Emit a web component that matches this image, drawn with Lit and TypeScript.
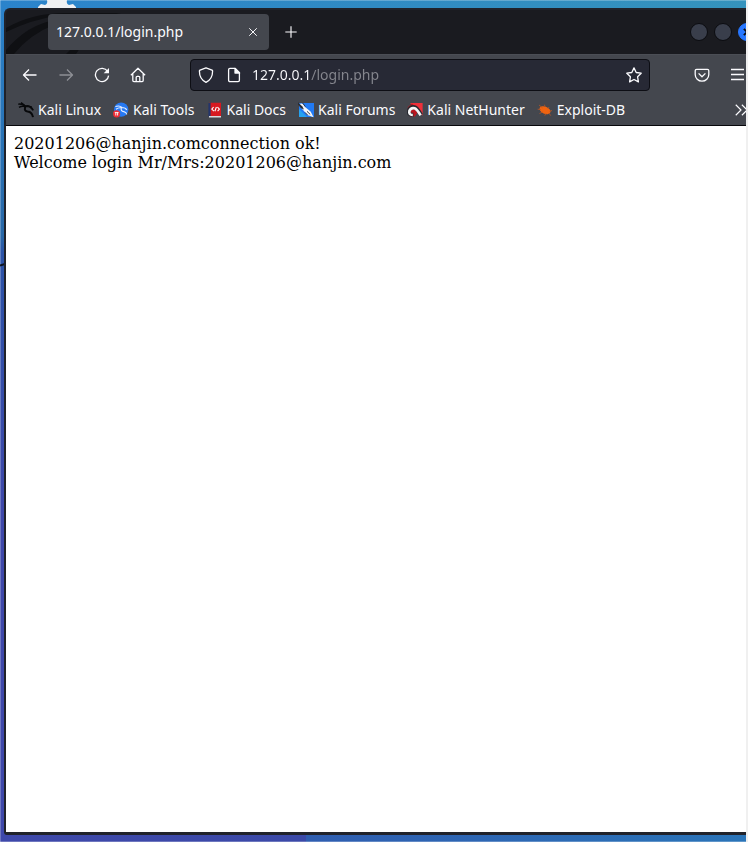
import { LitElement, html, css, svg } from "lit";
import { customElement } from "lit/decorators.js";

const icon = (size: number, body: unknown, cls = "") =>
  html`<svg class="icon ${cls}" width=${size} height=${size} viewBox="0 0 16 16" aria-hidden="true">${body}</svg>`;

const back = svg`<path d="M14.5 8H1.5M7 2.5L1.5 8L7 13.5"/>`;
const forward = svg`<path d="M1.5 8H14.5M9 2.5L14.5 8L9 13.5"/>`;
const reload = svg`<path d="M13.6 4.4A6.6 6.6 0 1 0 14.6 8.6"/><path d="M15 1V6.3H9.7Z" fill="currentColor" stroke="none"/>`;
const home = svg`<path d="M0.9 8.2L8 1.2L15.1 8.2M2.8 7V13.6Q2.8 14.7 3.9 14.7H12.1Q13.2 14.7 13.2 13.6V7M6.2 14.5V10.3Q6.2 9.3 7.2 9.3H8.8Q9.8 9.3 9.8 10.3V14.5"/>`;
const shield = svg`<path d="M8 0.8L14 3.1Q14.6 3.4 14.6 4C14.6 9.4 12.4 13.2 8 15.3C3.6 13.2 1.4 9.4 1.4 4Q1.4 3.4 2 3.1Z"/>`;
const doc = svg`<path d="M3.6 1.4H9.2L13.4 5.6V13.2Q13.4 14.6 12 14.6H4Q2.6 14.6 2.6 13.2V2.8Q2.6 1.4 4 1.4"/><path d="M9 1.4V6H13.6Z" fill="currentColor"/>`;
const star = svg`<path d="M8 0.9L10.2 5.5L15.2 6.2L11.6 9.8L12.4 14.9L8 12.5L3.6 14.9L4.4 9.8L0.8 6.2L5.8 5.5Z"/>`;
const pocket = svg`<path d="M2.6 2.4H13.4Q14.8 2.4 14.8 3.8V7.4A6.8 6.8 0 0 1 1.2 7.4V3.8Q1.2 2.4 2.6 2.4ZM4.6 6.4L8 9.7L11.4 6.4"/>`;
const menu = svg`<path d="M1 2.5H14M1 7.5H14M1 12.5H14"/>`;
const more = svg`<path d="M2 2L8 8L2 14M9 2L15 8L9 14"/>`;
const close = svg`<path d="M3 3L13 13M13 3L3 13"/>`;
const plus = svg`<path d="M8 1.5V14.5M1.5 8H14.5"/>`;

const bookmarks = [
  {
    label: "Kali Linux",
    art: svg`<g fill="none" stroke="#08090b"><path d="M0.3 2.2Q4 1.6 7.4 4.6M1 5.4Q4 3.6 7 4.6M3 0.6L6.5 3.4" stroke-width="1.5"/><path d="M5 3.2Q7.8 3.8 7 6Q6.2 9 9.6 9.4Q14.2 9.8 15 15.2" stroke-width="2"/><path d="M6.6 4.4Q12 2.6 15.2 8.4M9 4.2L13.8 5.2" stroke-width="1.8"/></g>`,
  },
  {
    label: "Kali Tools",
    art: svg`<circle cx="8.2" cy="7.6" r="7.2" fill="#2679f3"/><path d="M2.4 4.6Q6.5 3 9 5.5M3 7.2Q6 5 9 6M8.3 5.4Q7.4 9.2 10.8 9.6Q13.4 10.2 13.8 12.4M8.8 5.5Q12.6 5.5 13.8 8" fill="none" stroke="#e6efff" stroke-width="1.1"/><circle cx="3.6" cy="11.8" r="3.6" fill="#ed2d35"/><path d="M2.8 10.4V13.5M4.6 10.4V13.5M1.8 10.6H5.6" stroke="#fff" stroke-width="0.9"/>`,
  },
  {
    label: "Kali Docs",
    art: svg`<path d="M2 0.8H14V14.2H2Z" fill="#d71920"/><path d="M1.4 1.2L3.6 0.6V14.4H1.4Z" fill="#24356b"/><path d="M2 14H14V15.6H2Z" fill="#d9d9dc"/><path d="M6.6 5L4.8 7.2L7 9.2M10.4 5L12.4 7.2L10.6 9.2M9.4 5L7.9 9.3" fill="none" stroke="#fff" stroke-width="1.1"/>`,
  },
  {
    label: "Kali Forums",
    art: svg`<path d="M1 1H16V15H1Z" fill="#217af4"/><path d="M1 7L9 15H1Z" fill="#26a2ef"/><path d="M0.4 2L4.4 1.4L7 5L12.6 9.6L15.6 15.2L9.4 13L4.2 7Z" fill="#f4f5f7"/><path d="M0 0.2L4.4 4.6L6 7.6L3 6.2L0 2.6Z" fill="#292d36"/><path d="M9 9.3L12.2 12.4M4.4 0.8L7.4 4.6M7 10.4L9.6 13" fill="none" stroke="#292d36" stroke-width="0.9"/>`,
  },
  {
    label: "Kali NetHunter",
    art: svg`<path d="M3 1H15.6V13.6Z" fill="#ef303a"/><path d="M0.8 5L5 1.4L12 8L8 14.6H3Q0.4 11 0.8 5Z" fill="#b9161f"/><path d="M6.4 12.8Q1 13.2 1.8 8.8Q3 4.6 7.6 5.2Q10.2 5.8 14 13" fill="none" stroke="#272a31" stroke-width="4"/><path d="M5.8 13Q1.6 13 2.4 9Q3.6 5.4 7.6 6.2Q10 7 13.6 13.4" fill="none" stroke="#f5f5f6" stroke-width="2.7"/>`,
  },
  {
    label: "Exploit-DB",
    art: svg`<ellipse cx="8" cy="8.2" rx="5.8" ry="3.6" transform="rotate(24 8 8.2)" fill="#ef6310"/><path d="M2 3L5.4 5.7M7.4 2.7L8.2 5M0.6 7.2L4 7.7M2.5 11.5L5.5 10M7.8 13.7L9 11.3M13.8 13.7L11.8 11M12 5L11 7M15 8.5L12.6 9.4" stroke="#b85724" stroke-width="0.8"/>`,
  },
];

@customElement("app-root")
export class AppRoot extends LitElement {
  static styles = css`
    :host {
      display: block;
      box-sizing: border-box;
      position: relative;
      min-height: 100vh;
      padding: 8px 0 7px 4px;
      overflow: hidden;
      border-right: 2px solid #f0f0f0;
      font: 14px/20px "Noto Sans", sans-serif;
      color: #fbfbfe;
      background:
        linear-gradient(#ffffff40, #ffffff40) top / 100% 1px no-repeat,
        linear-gradient(#ffffff40, #ffffff40) bottom / 100% 1px no-repeat,
        linear-gradient(#ffffff40, #ffffff40) left / 1px 100% no-repeat,
        linear-gradient(90deg, #2b83cb, #3593bd) top / 100% 9px no-repeat,
        linear-gradient(90deg, #3e48aa, #3b49a8 41%, #2f5db0 41%, #2a74b8) bottom / 100% 9px no-repeat,
        linear-gradient(#2b83cb, #2868a8 28%, #2b53a8 30%, #3e48aa 60%);
    }
    * { box-sizing: border-box; }
    .gear { position: absolute; top: 0; left: 38px; }
    .branch { position: absolute; top: 262px; left: 0; }
    .window {
      position: relative;
      display: flex;
      flex-direction: column;
      min-height: calc(100vh - 15px);
      border: solid #20222a;
      border-width: 2px 0 3px 2px;
      border-radius: 6px 0 0 3px;
      overflow: hidden;
      background: #1a1b20;
    }
    button {
      display: grid;
      place-items: center;
      padding: 0;
      border: 0;
      color: inherit;
      background: none;
    }
    .icon { display: block; flex: none; fill: none; stroke: currentColor; stroke-width: 1.3; stroke-linejoin: round; }
    .titlebar { position: relative; display: flex; align-items: center; height: 44px; padding-left: 42px; }
    .dragon { position: absolute; left: 0; top: 0; }
    .tab {
      position: relative;
      display: flex;
      align-items: center;
      justify-content: space-between;
      width: 221px;
      height: 36px;
      padding: 0 10px 0 8px;
      border-radius: 4px;
      background: #44474e;
    }
    .add { width: 24px; height: 24px; margin-left: 10px; }
    .controls { display: flex; gap: 6px; margin: 0 -10px 0 auto; }
    .round { width: 18px; height: 18px; border: 1px solid #0b0c10; border-radius: 50%; background: #393e4b; }
    .round.quit { border-color: #2777ff; background: #2777ff; color: #0b0c10; }
    .quit .icon { stroke-width: 3; }
    .toolbar { display: flex; align-items: center; height: 40px; padding-left: 12px; background: #44474e; border-top: 1px solid #4b4e55; }
    .nav { display: flex; gap: 12px; }
    .nav button, .tool { width: 24px; height: 24px; }
    .dim { opacity: 0.4; }
    .address {
      display: flex;
      align-items: center;
      flex: 1;
      height: 32px;
      margin: 0 40px;
      padding: 0 7px;
      border: 1px solid #0d0e14;
      border-radius: 4px;
      background: #272935;
    }
    .address .page { margin: 0 10px 0 12px; }
    .url {
      flex: 1;
      min-width: 0;
      padding: 0;
      border: 0;
      outline: 0;
      font: 14px/20px "Noto Sans", sans-serif;
      color: transparent;
      background: linear-gradient(90deg, #fbfbfe 59px, #85868e 59px);
      -webkit-background-clip: text;
      background-clip: text;
    }
    .tools { display: flex; gap: 12px; margin-right: -4px; }
    .bookmarks { display: flex; align-items: center; height: 32px; padding: 0 0 0 12px; background: #44474e; border-bottom: 1px solid #08080c; }
    .links { display: flex; gap: 12px; flex: 1; min-width: 0; }
    .bookmark { display: flex; align-items: center; gap: 4px; color: inherit; text-decoration: none; white-space: nowrap; }
    .bookmark .icon { stroke: none; }
    .more { margin-right: -2px; }
    main { flex: 1; padding: 8px; color: #000; background: #fff; font: 16px/19px "DejaVu Serif", serif; }
    main p { margin: 0; }
  `;

  render() {
    return html`
      <svg class="gear" width="38" height="9" aria-hidden="true"><path d="M9 0H29Q28 4 31 5L35 4L38 7V9H0V7L3 4L7 5Q10 4 9 0Z" fill="#f0f1f3"/></svg>
      <svg class="branch" width="5" height="5" aria-hidden="true"><path d="M0 3.5L5 2" stroke="#0d1420" stroke-width="2"/></svg>
      <div class="window">
        <div class="titlebar">
          <svg class="dragon" width="120" height="44" aria-hidden="true">
            <path d="M0 18Q26 3 60 3H110L120 5L58 4Q24 10 0 22ZM0 40Q22 14 50 10V14Q24 24 8 44H0ZM60 44L66 38H74L70 44Z" fill="#0f1013"/>
          </svg>
          <div class="tab">
            <span>127.0.0.1/login.php</span>
            <button aria-label="Close tab">${icon(12, close)}</button>
          </div>
          <button class="add" aria-label="New tab">${icon(14, plus)}</button>
          <div class="controls">
            <button class="round" aria-label="Minimize"></button>
            <button class="round" aria-label="Maximize"></button>
            <button class="round quit" aria-label="Close window">${icon(10, close)}</button>
          </div>
        </div>
        <div class="toolbar">
          <nav class="nav">
            <button aria-label="Back">${icon(16, back)}</button>
            <button class="dim" aria-label="Forward">${icon(16, forward)}</button>
            <button aria-label="Reload">${icon(16, reload)}</button>
            <button aria-label="Home">${icon(16, home)}</button>
          </nav>
          <div class="address">
            ${icon(16, shield)}${icon(16, doc, "page")}
            <input class="url" aria-label="Address" value="127.0.0.1/login.php" />
            <button aria-label="Bookmark this page">${icon(16, star)}</button>
          </div>
          <div class="tools">
            <button class="tool" aria-label="Save to Pocket">${icon(16, pocket)}</button>
            <button class="tool" aria-label="Menu">${icon(16, menu)}</button>
          </div>
        </div>
        <div class="bookmarks">
          <nav class="links">
            ${bookmarks.map((b) => html`<a class="bookmark" href="#">${icon(16, b.art)}${b.label}</a>`)}
          </nav>
          <button class="more" aria-label="More bookmarks">${icon(14, more)}</button>
        </div>
        <main>
          <p>20201206@hanjin.comconnection ok!</p>
          <p>Welcome login Mr/Mrs:20201206@hanjin.com</p>
        </main>
      </div>
    `;
  }
}
